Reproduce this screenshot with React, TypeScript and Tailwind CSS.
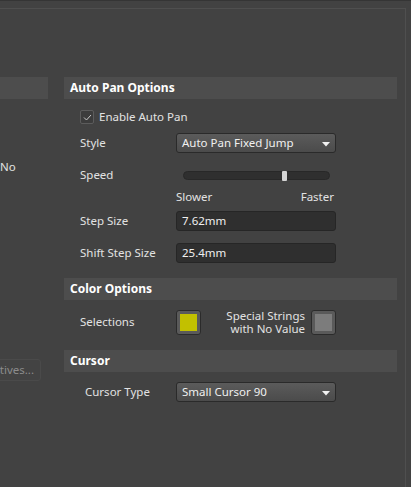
import React from 'react';

const Header = ({ title }: { title?: string }) => (
  <div className="h-[22px] bg-[#4d4d4d] flex items-center pl-[6px] text-[12px] font-bold text-white">
    {title}
  </div>
);

const Caret = () => (
  <svg width="8" height="5" viewBox="0 0 8 5" className="absolute right-[5px] top-[8px]">
    <path d="M0 0 H8 L4 4.5 Z" fill="#f2f2f2" />
  </svg>
);

const Dropdown = ({ value }: { value: string }) => (
  <div className="relative w-[160px] h-[20px] rounded-[3px] border border-[#2a2a2a] bg-gradient-to-b from-[#5b5b5b] to-[#4b4b4b] flex items-center pl-[5px] text-[#f0f0f0]">
    {value}
    <Caret />
  </div>
);

const Input = ({ value }: { value: string }) => (
  <div className="w-[160px] h-[20px] rounded-[3px] border border-[#262626] bg-[#2f2f2f] flex items-center pl-[5px] text-[#f0f0f0]">
    {value}
  </div>
);

const Row = ({ label, children }: { label: string; children: React.ReactNode }) => (
  <div className="flex items-center pl-[16px] h-[20px]">
    <div className="w-[96px] text-[#e2e2e2]">{label}</div>
    {children}
  </div>
);

const Swatch = ({ color }: { color: string }) => (
  <div className="w-[25px] h-[25px] shrink-0 rounded-[3px] border border-[#2b2b2b] bg-[#5a5a5a] p-[3px]">
    <div className="w-full h-full" style={{ background: color }} />
  </div>
);

export default function App() {
  return (
    <div
      className="w-[411px] h-[487px] bg-[#424242] text-[11.5px] overflow-hidden"
      style={{ fontFamily: '"Noto Sans", "Open Sans", sans-serif' }}
    >
      <div className="h-[1px] bg-[#353535]" />
      <div className="mt-[7px] w-[406px] h-[479px] border-t border-r border-[#4f4f4f] flex gap-[16px] pt-[68px]">
        {/* левая колонка, обрезана */}
        <div className="w-[48px] shrink-0 overflow-hidden">
          <Header />
          <div className="mt-[62px] text-[#e2e2e2] leading-none">No</div>
          <div className="mt-[186px] flex justify-end pr-[7px]">
            <div className="shrink-0 h-[22px] px-[6px] rounded-[3px] border border-[#4a4a4a] bg-[#434343] flex items-center text-[#8c8c8c]">
              Primitives...
            </div>
          </div>
        </div>

        {/* правая колонка */}
        <div className="w-[333px] shrink-0 text-[#e2e2e2]">
          <Header title="Auto Pan Options" />
          <div className="mt-[11px] h-[14px] flex items-center pl-[16px] gap-[5px]">
            <div className="w-[14px] h-[14px] rounded-[2px] border border-[#5c5c5c] bg-[#3c3c3c] flex items-center justify-center">
              <svg width="9" height="7" viewBox="0 0 9 7">
                <path d="M1 3.5 L3.5 6 L8 1" stroke="#c8c8c8" strokeWidth="1" fill="none" />
              </svg>
            </div>
            <span>Enable Auto Pan</span>
          </div>
          <div className="mt-[9px]">
            <Row label="Style">
              <Dropdown value="Auto Pan Fixed Jump" />
            </Row>
          </div>
          <div className="mt-[12px]">
            <Row label="Speed">
              <div className="w-[160px] h-[20px] flex items-center pl-[7px]">
                <div className="relative w-[147px] h-[9px] rounded-full bg-[#2f2f2f] border border-[#282828]">
                  <div className="absolute left-[98px] top-[-1px] w-[5px] h-[10px] rounded-[1px] bg-[#d4d4d4]" />
                </div>
              </div>
            </Row>
          </div>
          <div className="mt-[4px] w-[272px] h-[16px] flex items-center pl-[112px] pr-[2px] justify-between">
            <span>Slower</span>
            <span>Faster</span>
          </div>
          <div className="mt-[6px]">
            <Row label="Step Size">
              <Input value="7.62mm" />
            </Row>
          </div>
          <div className="mt-[12px]">
            <Row label="Shift Step Size">
              <Input value="25.4mm" />
            </Row>
          </div>
          <div className="mt-[15px]">
            <Header title="Color Options" />
          </div>
          <div className="mt-[10px] w-[272px] h-[24px] flex items-center pl-[16px]">
            <div className="w-[96px]">Selections</div>
            <Swatch color="#c2c000" />
            <div className="ml-auto mr-[6px] text-right leading-[13px]">
              Special Strings
              <br />
              with No Value
            </div>
            <Swatch color="#7c7c7c" />
          </div>
          <div className="mt-[16px]">
            <Header title="Cursor" />
          </div>
          <div className="mt-[10px]">
            <div className="flex items-center pl-[21px] h-[20px]">
              <div className="w-[91px]">Cursor Type</div>
              <Dropdown value="Small Cursor 90" />
            </div>
          </div>
        </div>
      </div>
    </div>
  );
}
